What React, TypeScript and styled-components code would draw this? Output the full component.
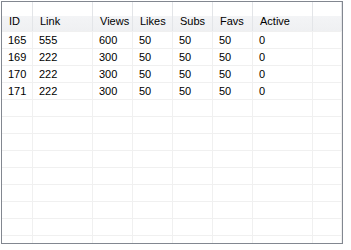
import React from "react"
import styled, { createGlobalStyle } from "styled-components"

const GlobalStyle = createGlobalStyle`
  html, body {
    margin: 0;
    padding: 0;
    background: #ffffff;
  }
  body {
    font-family: "Liberation Sans", Arial, sans-serif;
    font-size: 11px;
  }
`

type Column = { key: string; title: string; width: number }

const columns: Column[] = [
  { key: "id", title: "ID", width: 31 },
  { key: "link", title: "Link", width: 60 },
  { key: "views", title: "Views", width: 40 },
  { key: "likes", title: "Likes", width: 40 },
  { key: "subs", title: "Subs", width: 40 },
  { key: "favs", title: "Favs", width: 40 },
  { key: "active", title: "Active", width: 60 }
]

type Row = Record<string, string>

const rows: Row[] = [
  { id: "165", link: "555", views: "600", likes: "50", subs: "50", favs: "50", active: "0" },
  { id: "169", link: "222", views: "300", likes: "50", subs: "50", favs: "50", active: "0" },
  { id: "170", link: "222", views: "300", likes: "50", subs: "50", favs: "50", active: "0" },
  { id: "171", link: "222", views: "300", likes: "50", subs: "50", favs: "50", active: "0" }
]

const EMPTY_ROWS = 10

const ListView = styled.div`
  box-sizing: border-box;
  margin: 1px 0 0 1px;
  width: 342px;
  height: 243px;
  border: 1px solid #828790;
  background: #ffffff;
  overflow: hidden;
  display: flex;
  flex-direction: column;
`

const Header = styled.div`
  display: flex;
  flex-direction: row;
  height: 29px;
  flex-shrink: 0;
  background: linear-gradient(to bottom, #ffffff 0%, #ffffff 50%, #f3f4f6 50%, #eff0f2 100%);
  border-bottom: 1px solid #f0f0f0;
`

const HeaderCell = styled.div<{ $width?: number }>`
  box-sizing: border-box;
  width: ${(p) => (p.$width ? `${p.$width}px` : "auto")};
  flex: ${(p) => (p.$width ? "none" : "1")};
  border-right: 1px solid #e3e5e8;
  padding: 8px 0 0 7px;
  display: flex;
  align-items: center;
  color: #000000;
  white-space: nowrap;
`

const Body = styled.div`
  display: flex;
  flex-direction: column;
`

const Item = styled.div`
  display: flex;
  flex-direction: row;
  height: 17px;
  flex-shrink: 0;
  box-sizing: border-box;
  border-bottom: 1px solid #f0f0f0;
`

const Cell = styled.div<{ $width?: number }>`
  box-sizing: border-box;
  width: ${(p) => (p.$width ? `${p.$width}px` : "auto")};
  flex: ${(p) => (p.$width ? "none" : "1")};
  border-right: 1px solid #f0f0f0;
  padding: 1px 0 0 6px;
  line-height: 15px;
  color: #000000;
  white-space: nowrap;
  overflow: hidden;
`

const App: React.FC = () => {
  return (
    <>
      <GlobalStyle />
      <ListView>
        <Header>
          {columns.map((col) => (
            <HeaderCell key={col.key} $width={col.width} children={col.title} />
          ))}
          <HeaderCell />
        </Header>
        <Body>
          {rows.map((row) => (
            <Item key={row.id}>
              {columns.map((col) => (
                <Cell key={col.key} $width={col.width} children={row[col.key]} />
              ))}
              <Cell />
            </Item>
          ))}
          {Array.from({ length: EMPTY_ROWS }, (_, i) => (
            <Item key={`empty-${i}`}>
              {columns.map((col) => (
                <Cell key={col.key} $width={col.width} />
              ))}
              <Cell />
            </Item>
          ))}
        </Body>
      </ListView>
    </>
  )
}

export default App
